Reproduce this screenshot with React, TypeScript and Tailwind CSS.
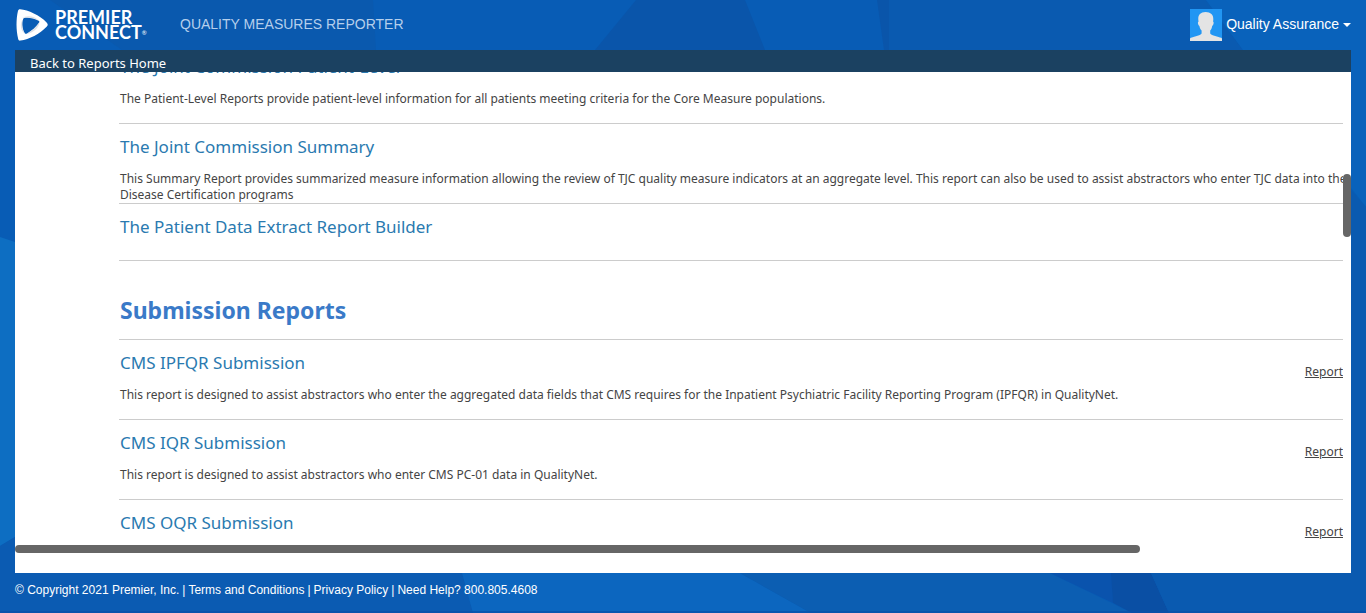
type Report = {
  title: string;
  description: string[];
  link?: boolean;
  short?: boolean;
};

const summaryReports: Report[] = [
  {
    title: "The Joint Commission Patient-Level",
    description: [
      "The Patient-Level Reports provide patient-level information for all patients meeting criteria for the Core Measure populations.",
    ],
  },
  {
    title: "The Joint Commission Summary",
    description: [
      "This Summary Report provides summarized measure information allowing the review of TJC quality measure indicators at an aggregate level. This report can also be used to assist abstractors who enter TJC data into the",
      "Disease Certification programs",
    ],
  },
  { title: "The Patient Data Extract Report Builder", description: [], short: true },
];

const submissionReports: Report[] = [
  {
    title: "CMS IPFQR Submission",
    description: [
      "This report is designed to assist abstractors who enter the aggregated data fields that CMS requires for the Inpatient Psychiatric Facility Reporting Program (IPFQR) in QualityNet.",
    ],
    link: true,
  },
  {
    title: "CMS IQR Submission",
    description: [
      "This report is designed to assist abstractors who enter CMS PC-01 data in QualityNet.",
    ],
    link: true,
  },
  { title: "CMS OQR Submission", description: [], link: true },
];

function Backdrop() {
  return (
    <svg
      aria-hidden="true"
      className="absolute inset-0 -z-10 h-full w-full"
      viewBox="0 0 1366 613"
      preserveAspectRatio="none"
    >
      <rect width="1366" height="613" fill="#085cb5" />
      <path d="M50 0H373L376 50H122Z" fill="#0a59ae" />
      <path d="M636 0H745L765 50H595Z" fill="#0a55aa" />
      <path d="M877 0H889V50H884Z" fill="#0a55aa" />
      <path d="M889 0H1206L1243 50H889Z" fill="#0a5ab0" />
      <path d="M1206 0H1366V207L1243 50Z" fill="#0962bb" />
      <path d="M1340 178L1366 207V613H1340Z" fill="#0a5ab0" />
      <path d="M0 237L15 242V537L0 546Z" fill="#0d6ec2" />
      <path d="M15 537V573H462L473 613H0V546Z" fill="#0b5bb2" />
      <path d="M462 573H740L811 613H473Z" fill="#0c66bf" />
      <path d="M740 573H1050L1132 613H811Z" fill="#0c5eb2" />
      <path d="M1050 573H1112L1113 603Z" fill="#0a53ad" />
      <path d="M1111 573H1151L1169 613H1132L1113 603Z" fill="#0a4fa4" />
      <path d="M1151 573H1366V613H1169Z" fill="#0a5ab0" />
      <rect y="611" width="1366" height="2" fill="#0850a8" opacity="0.7" />
    </svg>
  );
}

function Logo() {
  return (
    <a href="#" aria-label="Premier Connect" className="flex items-center gap-[6px] text-white">
      <svg aria-hidden="true" width="33" height="32" viewBox="0 0 33 32">
        <path
          fill="#fff"
          fillRule="evenodd"
          d="M4.2 0.2C12 1 24 6 30.6 13.4C32.2 15 32.1 16.4 30.6 17.8C24 25 13 30.4 4.5 31.6C3.2 31.8 2.5 31.3 2.2 30C0 21 0 10 2 1.8C2.3 0.6 3 0.1 4.2 0.2ZM7.2 10C5.6 13.5 6.2 20 8.8 24.2C9.2 24.9 9.8 25 10.6 24.7C15.9 21.9 20 18.2 23.1 13.6C23.5 12.8 23.4 12.1 22.6 11.7C18.2 9.2 12.3 8.3 8.3 9C7.7 9.1 7.4 9.5 7.2 10Z"
        />
        <path fill="#c4ccd6" d="M5.4 9.4C8 8 16.4 7.8 23 11.6C18 7 11 5.8 5.4 9.4Z" opacity="0.6" />
        <path fill="#c4ccd6" d="M23.4 12.8C22.6 15.4 17.4 21.4 10.4 24.9C17 24.4 23.6 18.6 23.4 12.8Z" opacity="0.6" />
        <path fill="#c4ccd6" d="M8.8 24.4C6.2 21 5.4 14 7 10.2C3.6 14 4.4 21.8 8.8 24.4Z" opacity="0.6" />
      </svg>
      <span className="flex w-[110px] flex-col font-['Lato',sans-serif] text-[18px] leading-[15px] font-bold">
        <span>PREMIER</span>
        <span className="flex">
          <span>CONNECT</span>
          <span className="text-[6px] font-normal">®</span>
        </span>
      </span>
    </a>
  );
}

function Avatar() {
  return (
    <svg aria-hidden="true" width="32" height="32" viewBox="0 0 32 32">
      <rect width="32" height="32" fill="#2196f3" />
      <path
        fill="#e4e4e4"
        d="M15.6 3C10.6 3 8 5.8 8.3 10.4C8.3 11.2 8.4 11.8 8.6 12.6C7.4 12.8 8 16.4 9.4 17C9.8 19.2 10.6 20.6 11.6 21.6V24.4C10.4 26.8 3.4 27.4 0.8 28.8L0 29.4V32H32V29.4L31.2 28.8C28.6 27.4 21.4 26.8 20.2 24.4V21.6C21.2 20.6 21.8 19.2 22.2 17C23.6 16.4 24.2 12.8 23 12.6C23.2 11.8 23.3 11.2 23.3 10.4C23.6 5.8 20.6 3 15.6 3Z"
      />
    </svg>
  );
}

function ReportRow({ report }: { report: Report }) {
  return (
    <li
      className={`flex shrink-0 items-start justify-between border-b border-[#ccc] ${
        report.short ? "h-[57px]" : "h-20"
      }`}
    >
      <div className="w-0 flex-1 pt-3 pl-px whitespace-nowrap">
        <h3 className="text-[17px] leading-[21px]">
          <a href="#" className="text-[#2a7ab0]">
            {report.title}
          </a>
        </h3>
        <p className="pt-[14px] text-[12px] leading-4">
          {report.description.map((line) => (
            <span key={line} className="block">
              {line}
            </span>
          ))}
        </p>
      </div>
      {report.link && (
        <a href="#" className="shrink-0 pt-6 text-[12px] leading-4 underline">
          Report
        </a>
      )}
    </li>
  );
}

export default function App() {
  return (
    <div className="relative isolate flex h-screen flex-col overflow-hidden font-['Noto_Sans',sans-serif] text-[#444]">
      <Backdrop />
      <header className="flex h-[50px] shrink-0 items-center justify-between pr-[15px] pl-4 font-['Liberation_Sans',sans-serif] text-[14px]">
        <div className="flex items-center gap-[15px]">
          <Logo />
          <span className="pb-px text-[#b5cfec]">QUALITY MEASURES REPORTER</span>
        </div>
        <button type="button" className="flex items-center gap-1 text-white">
          <Avatar />
          <span className="pb-px">Quality Assurance</span>
          <svg aria-hidden="true" width="8" height="4" viewBox="0 0 8 4">
            <path d="M0 0H8L4 4Z" fill="#fff" />
          </svg>
        </button>
      </header>

      <main className="mx-[15px] flex min-h-0 flex-1 flex-col bg-white pb-5">
        <nav className="flex h-[22px] shrink-0 items-center bg-[#1b4161] px-[15px] pt-1 text-[13px] leading-[18px] text-white">
          <a href="#">Back to Reports Home</a>
        </nav>
        <div className="flex min-h-0 flex-1">
          <div className="min-w-0 flex-1 overflow-hidden pl-[104px]">
            <div className="-mt-7 flex flex-col">
              <ul className="flex flex-col">
                {summaryReports.map((report) => (
                  <ReportRow key={report.title} report={report} />
                ))}
              </ul>
              <h2 className="flex h-[79px] items-center border-b border-[#ccc] pt-5 pl-px text-[23px] font-bold text-[#3a7ac8]">
                Submission Reports
              </h2>
              <ul className="flex flex-col">
                {submissionReports.map((report) => (
                  <ReportRow key={report.title} report={report} />
                ))}
              </ul>
            </div>
          </div>
          <div className="w-2 shrink-0 pt-[102px]">
            <div className="h-[63px] rounded-full bg-[#666]" />
          </div>
        </div>
        <div className="h-2 shrink-0">
          <div className="h-full w-[84.2%] rounded-full bg-[#666]" />
        </div>
      </main>

      <footer className="flex h-10 shrink-0 items-center gap-[3px] px-[15px] pb-[6px] font-['Liberation_Sans',sans-serif] text-[12px] text-white">
        <span>© Copyright 2021 Premier, Inc.</span>
        <span>|</span>
        <a href="#">Terms and Conditions</a>
        <span>|</span>
        <a href="#">Privacy Policy</a>
        <span>|</span>
        <span>Need Help? 800.805.4608</span>
      </footer>
    </div>
  );
}
